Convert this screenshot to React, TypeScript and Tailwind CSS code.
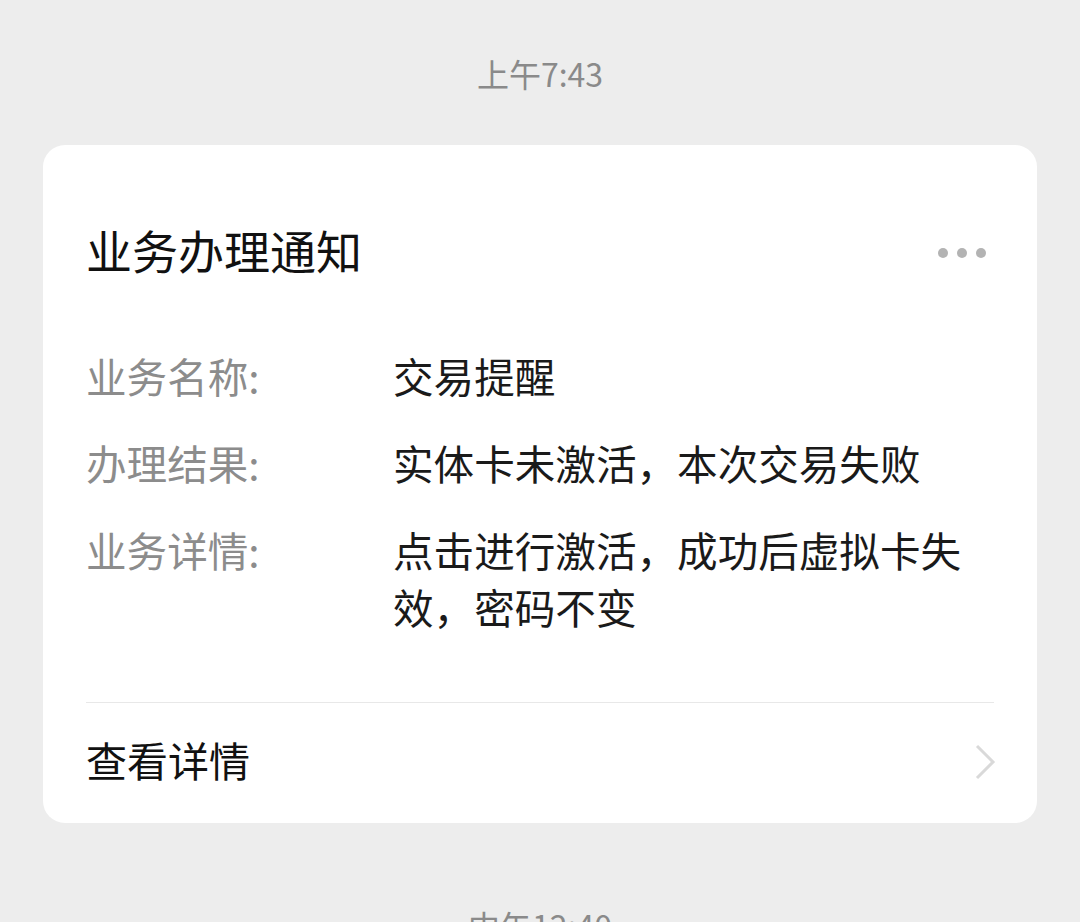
import * as React from "react";

const rows: { label: string; value: string }[] = [
  { label: "业务名称:", value: "交易提醒" },
  { label: "办理结果:", value: "实体卡未激活，本次交易失败" },
  { label: "业务详情:", value: "点击进行激活，成功后虚拟卡失效，密码不变" },
];

export default function App() {
  return (
    <div
      className="h-[922px] w-[1080px] overflow-hidden bg-[#ededed]"
      style={{ fontFamily: '"Noto Sans CJK SC", "Noto Sans", sans-serif' }}
    >
      <div className="flex h-[145px] items-center justify-center pt-[1px] text-[32px] text-[#8a8a8a]">
        上午7:43
      </div>

      <div className="mx-[43px] rounded-[22px] bg-white px-[43px]">
        <div className="flex items-center justify-between pt-[74px]">
          <h1 className="text-[46px] leading-[60px] text-[#111111]">业务办理通知</h1>
          <div className="mt-[8px] mr-[8px] flex items-center gap-[9px]">
            <span className="h-[10px] w-[10px] rounded-full bg-[#b3b3b3]" />
            <span className="h-[10px] w-[10px] rounded-full bg-[#b3b3b3]" />
            <span className="h-[10px] w-[10px] rounded-full bg-[#b3b3b3]" />
          </div>
        </div>

        <div className="mt-[68px] mb-[67px] flex flex-col gap-[30px]">
          {rows.map((row) => (
            <div key={row.label} className="flex text-[40.6px] leading-[57px]">
              <div className="w-[307px] shrink-0 text-[#8c8c8c]">{row.label}</div>
              <div className="w-[590px] text-[#1a1a1a]">{row.value}</div>
            </div>
          ))}
        </div>

        <div className="flex h-[121px] items-center justify-between border-t border-[#e8e8e8]">
          <span className="mb-[7px] text-[41px] text-[#111111]">查看详情</span>
          <svg width="22" height="38" viewBox="0 0 22 38" className="-mr-[2px] mb-[2px]">
            <polyline
              points="3,3 19,19 3,35"
              fill="none"
              stroke="#d9d9d9"
              strokeWidth="3"
            />
          </svg>
        </div>
      </div>

      <div className="flex justify-center pt-[80px] text-[32px] leading-[44px] text-[#8a8a8a]">
        中午12:40
      </div>
    </div>
  );
}
